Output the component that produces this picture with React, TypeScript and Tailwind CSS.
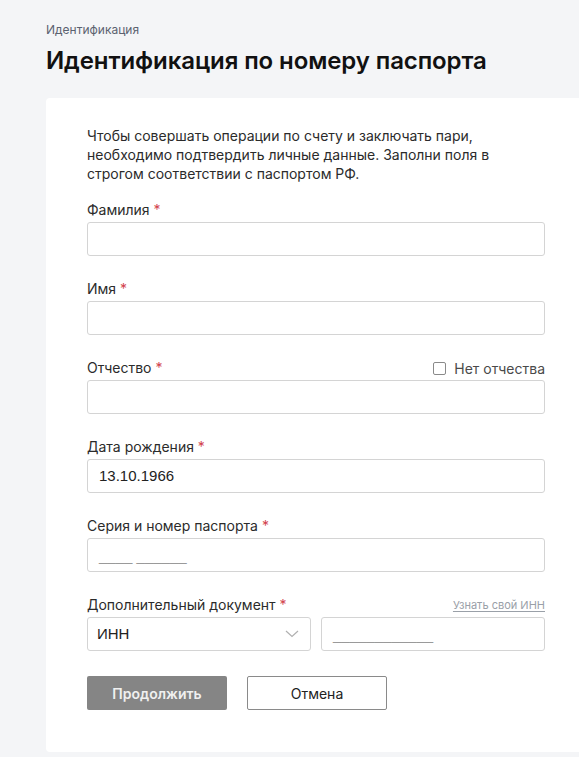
import React from "react";

const inter = { fontFamily: "Inter, 'Noto Sans', sans-serif" };

function Label({ children }: { children: React.ReactNode }) {
  return (
    <span className="text-[14px] leading-[20px] text-[#2b2b2b]">
      {children} <span className="text-[#d2424d]">*</span>
    </span>
  );
}

function TextInput({ value, mask }: { value?: string; mask?: string }) {
  return (
    <div className="h-[34px] w-full min-w-0 overflow-hidden rounded-[3px] border border-[#d4d4d4] bg-white px-[11px] flex items-center font-['Liberation_Sans',Arial,sans-serif] text-[15px]">
      {value ? <span className="text-[#222]">{value}</span> : null}
      {mask ? <span className="text-[#9a9a9a] pt-[2px] whitespace-pre">{mask}</span> : null}
    </div>
  );
}

function Field({ label, right, children }: { label: string; right?: React.ReactNode; children: React.ReactNode }) {
  return (
    <div className="flex w-[458px] flex-col gap-[2px]">
      <div className="flex items-center justify-between h-[20px]">
        <Label>{label}</Label>
        {right}
      </div>
      {children}
    </div>
  );
}

export default function App() {
  return (
    <div className="min-h-[757px] w-[579px] overflow-hidden bg-[#f4f5f7] pl-[46px]" style={inter}>
      <div className="pt-[22px] text-[12px] leading-[16px] text-[#5b6270]">Идентификация</div>
      <h1 className="mt-[7px] text-[24px] leading-[32px] font-semibold tracking-[-0.1px] text-[#111] whitespace-nowrap">
        Идентификация по номеру паспорта
      </h1>
      <div className="mt-[21px] w-[540px] rounded-[4px] bg-white pl-[41px] pr-[41px] pt-[28px] pb-[42px]">
        <p className="text-[14px] leading-[19px] text-[#2b2b2b]">
          Чтобы совершать операции по счету и заключать пари, необходимо подтвердить личные данные. Заполни поля в строгом соответствии с паспортом РФ.
        </p>
        <div className="mt-[17px] flex flex-col gap-[23px]">
          <Field label="Фамилия">
            <TextInput />
          </Field>
          <Field label="Имя">
            <TextInput />
          </Field>
          <Field
            label="Отчество"
            right={
              <label className="flex items-center gap-[8px] text-[14px] text-[#4a4a4a]">
                <span className="h-[13px] w-[13px] rounded-[2px] border border-[#8a8a8a] bg-white" />
                Нет отчества
              </label>
            }
          >
            <TextInput />
          </Field>
          <Field label="Дата рождения">
            <TextInput value="13.10.1966" />
          </Field>
          <Field label="Серия и номер паспорта">
            <TextInput mask="____ ______" />
          </Field>
          <Field
            label="Дополнительный документ"
            right={<span className="text-[11px] text-[#9aa0a8] underline underline-offset-2">Узнать свой ИНН</span>}
          >
            <div className="flex justify-between">
              <div className="h-[34px] w-[224px] rounded-[3px] border border-[#d4d4d4] bg-white pl-[9px] pr-[11px] flex items-center justify-between font-['Liberation_Sans',Arial,sans-serif] text-[15px] text-[#222]">
                <span>ИНН</span>
                <svg width="14" height="8" viewBox="0 0 14 8" fill="none">
                  <path d="M1 1l6 5.5L13 1" stroke="#b0b0b0" strokeWidth="1.2" />
                </svg>
              </div>
              <div className="w-[224px]">
                <TextInput mask="____________" />
              </div>
            </div>
          </Field>
        </div>
        <div className="mt-[25px] flex gap-[20px]">
          <button className="h-[34px] w-[140px] rounded-[2px] bg-[#858585] text-[14px] font-semibold text-[#f0f0f0]">
            Продолжить
          </button>
          <button className="h-[34px] w-[140px] rounded-[2px] border border-[#8a8a8a] bg-white text-[14px] text-[#222]">
            Отмена
          </button>
        </div>
      </div>
    </div>
  );
}
